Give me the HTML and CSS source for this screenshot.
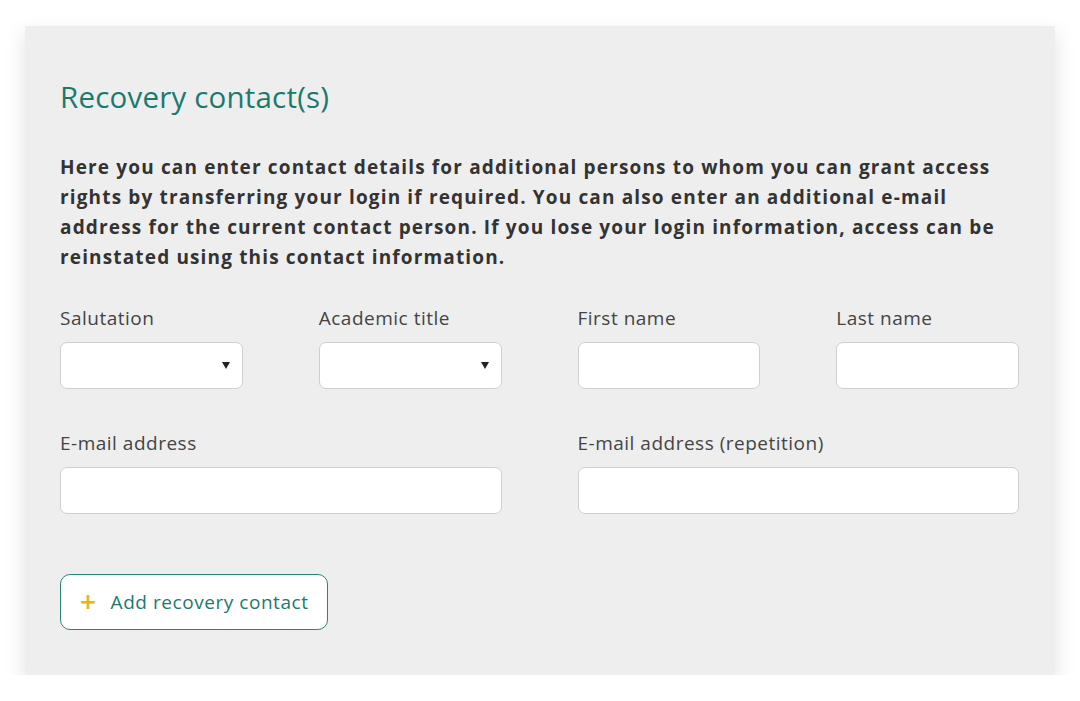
FILE: index.html
```html
<!DOCTYPE html>
<html lang="en">
<head>
<meta charset="utf-8">
<link rel="stylesheet" href="styles.css">
</head>
<body>
<section class="card">
  <h2 class="title">Recovery contact(s)</h2>
  <p class="intro">Here you can enter contact details for additional persons to whom you can grant access rights by transferring your login if required. You can also enter an additional e-mail address for the current contact person. If you lose your login information, access can be reinstated using this contact information.</p>
  <div class="grid">
    <label class="field">
      <span class="label">Salutation</span>
      <span class="select"><span class="caret"></span></span>
    </label>
    <label class="field">
      <span class="label">Academic title</span>
      <span class="select"><span class="caret"></span></span>
    </label>
    <label class="field">
      <span class="label">First name</span>
      <input class="input" type="text">
    </label>
    <label class="field">
      <span class="label">Last name</span>
      <input class="input" type="text">
    </label>
    <label class="field wide">
      <span class="label">E-mail address</span>
      <input class="input" type="text">
    </label>
    <label class="field wide">
      <span class="label">E-mail address (repetition)</span>
      <input class="input" type="text">
    </label>
  </div>
  <button class="add" type="button"><span class="plus">+</span>Add recovery contact</button>
</section>
</body>
</html>
```
FILE: styles.css
```css
* { box-sizing: border-box; }
html, body { margin: 0; background: #fff; }
body {
  font-family: "Open Sans", "Liberation Sans", sans-serif;
  padding: 26px 25px 0 25px;
}
.card {
  width: 1030px;
  height: 649px;
  background: #eeeeee;
  box-shadow: 0 8px 20px rgba(0,0,0,0.12);
  padding: 53px 36px 0 35px;
}
.title {
  margin: 0;
  font-weight: 400;
  font-size: 29.5px;
  line-height: 36px;
  color: #1b7a6e;
  letter-spacing: 0.2px;
}
.intro {
  margin: 37px 0 0 0;
  font-size: 19px;
  line-height: 30px;
  font-weight: 700;
  color: #333;
  letter-spacing: 1.15px;
}
.grid {
  margin-top: 35px;
  display: grid;
  grid-template-columns: repeat(4, 1fr);
  column-gap: 76px;
  row-gap: 43px;
}
.field { display: flex; flex-direction: column; gap: 13px; }
.wide { grid-column: span 2; }
.label {
  font-size: 19px;
  line-height: 22px;
  color: #444;
  letter-spacing: 0.5px;
}
.select, .input {
  height: 47px;
  background: #fff;
  border: 1px solid #cfcfcf;
  border-radius: 7px;
  font: inherit;
  width: 100%;
}
.select { display: flex; align-items: center; justify-content: flex-end; padding-right: 12px; }
.caret {
  width: 0; height: 0;
  border-left: 4.5px solid transparent;
  border-right: 4.5px solid transparent;
  border-top: 7px solid #222;
}
.add {
  margin-top: 60px;
  height: 56px;
  width: 268px;
  background: #fff;
  border: 1px solid #2a8579;
  border-radius: 10px;
  font-family: inherit;
  font-size: 19px;
  letter-spacing: 0.55px;
  color: #1b7a6e;
  display: flex;
  align-items: center;
  padding: 0 0 0 19px;
}
.plus {
  color: #e9b412;
  font-size: 28px;
  font-weight: 600;
  margin-right: 14px;
  line-height: 1;
  position: relative;
  top: -1px;
}
```
